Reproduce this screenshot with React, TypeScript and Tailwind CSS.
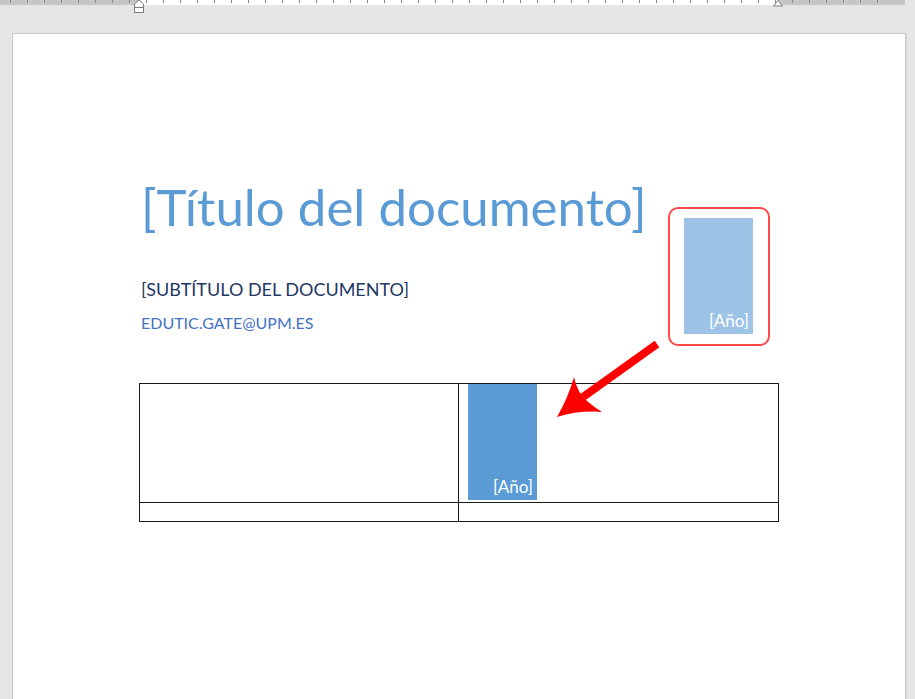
import React from "react";

const font = { fontFamily: "Lato, 'Noto Sans', sans-serif" };

function Ruler() {
  const ticks = Array.from({ length: 52 }, (_, i) => i);
  return (
    <div className="relative h-[5px] w-full">
      <div className="flex h-[5px]">
        <div className="w-[138px] bg-[#c6c6c6]" />
        <div className="w-[640px] bg-white" />
        <div className="w-[127px] bg-[#c6c6c6]" />
      </div>
      {/* tick marks along the ruler */}
      <div className="absolute left-[10px] top-0 flex h-[4px] gap-[16px]">
        {ticks.map((t) => (
          <div key={t} className="w-px h-[3px] bg-[#8a8a8a]" />
        ))}
      </div>
      {/* indent markers */}
      <svg className="absolute left-[133px] top-0" width="12" height="14" viewBox="0 0 12 14">
        <path d="M1.5 4 L6 0 L10.5 4 L10.5 7.5 L1.5 7.5 Z" fill="#fff" stroke="#7a7a7a" />
        <rect x="1.5" y="7.5" width="9" height="5" fill="#fff" stroke="#7a7a7a" />
      </svg>
      <svg className="absolute left-[772px] top-0" width="12" height="7" viewBox="0 0 12 7">
        <path d="M1.5 6 L6 0.5 L10.5 6 Z" fill="#fff" stroke="#7a7a7a" />
      </svg>
    </div>
  );
}

function YearBox({ color }: { color: string }) {
  return (
    <div className={`flex h-[116px] w-[69px] items-end justify-end pb-[5px] pr-[4px] ${color}`}>
      <span className="text-[17px] leading-none text-white" style={font}>
        [Año]
      </span>
    </div>
  );
}

export default function App() {
  return (
    <div className="relative h-[699px] w-[915px] overflow-hidden bg-[#e6e6e6]">
      <Ruler />
      <div className="ml-[12px] mt-[28px] h-[700px] w-[894px] border border-[#c8c8c8] bg-white shadow-[1px_0_0_#d4d4d4]">
        <div className="flex pl-[128px] pt-[143px]">
          <div className="flex w-[527px] flex-col">
            <h1 className="text-[51px] font-normal leading-[60px] text-[#5b9bd5]" style={font}>
              [Título del documento]
            </h1>
            <div className="mt-[41px] text-[18px] leading-[22px] text-[#1f3864]" style={font}>
              [SUBTÍTULO DEL DOCUMENTO]
            </div>
            <div className="mt-[13px] text-[16px] leading-[20px] text-[#4472c4]" style={font}>
              EDUTIC.GATE@UPM.ES
            </div>
          </div>
          <div className="mt-[30px] h-[139px] w-[102px] rounded-[10px] border-2 border-[#ff4848] pl-[14px] pt-[9px]">
            <YearBox color="bg-[#9dc3e6]" />
          </div>
        </div>

        <table className="ml-[126px] mt-[37px] w-[640px] border-collapse">
          <tbody>
            <tr className="h-[119px]">
              <td className="w-[319px] border border-[#1a1a1a] p-0" />
              <td className="border border-[#1a1a1a] p-0 pl-[9px] align-top">
                <YearBox color="bg-[#5b9bd5]" />
              </td>
            </tr>
            <tr className="h-[19px]">
              <td className="border border-[#1a1a1a] p-0" />
              <td className="border border-[#1a1a1a] p-0" />
            </tr>
          </tbody>
        </table>
      </div>

      {/* red annotation arrow */}
      <svg className="pointer-events-none absolute left-0 top-0" width="915" height="699" viewBox="0 0 915 699">
        <line x1="657" y1="344" x2="583" y2="397" stroke="#ff0000" strokeWidth="8" />
        <path d="M557 417 Q568 398 574 377 Q577 392 587 401 Q594 407 602 412 Q580 410 557 417 Z" fill="#ff0000" />
      </svg>
    </div>
  );
}
